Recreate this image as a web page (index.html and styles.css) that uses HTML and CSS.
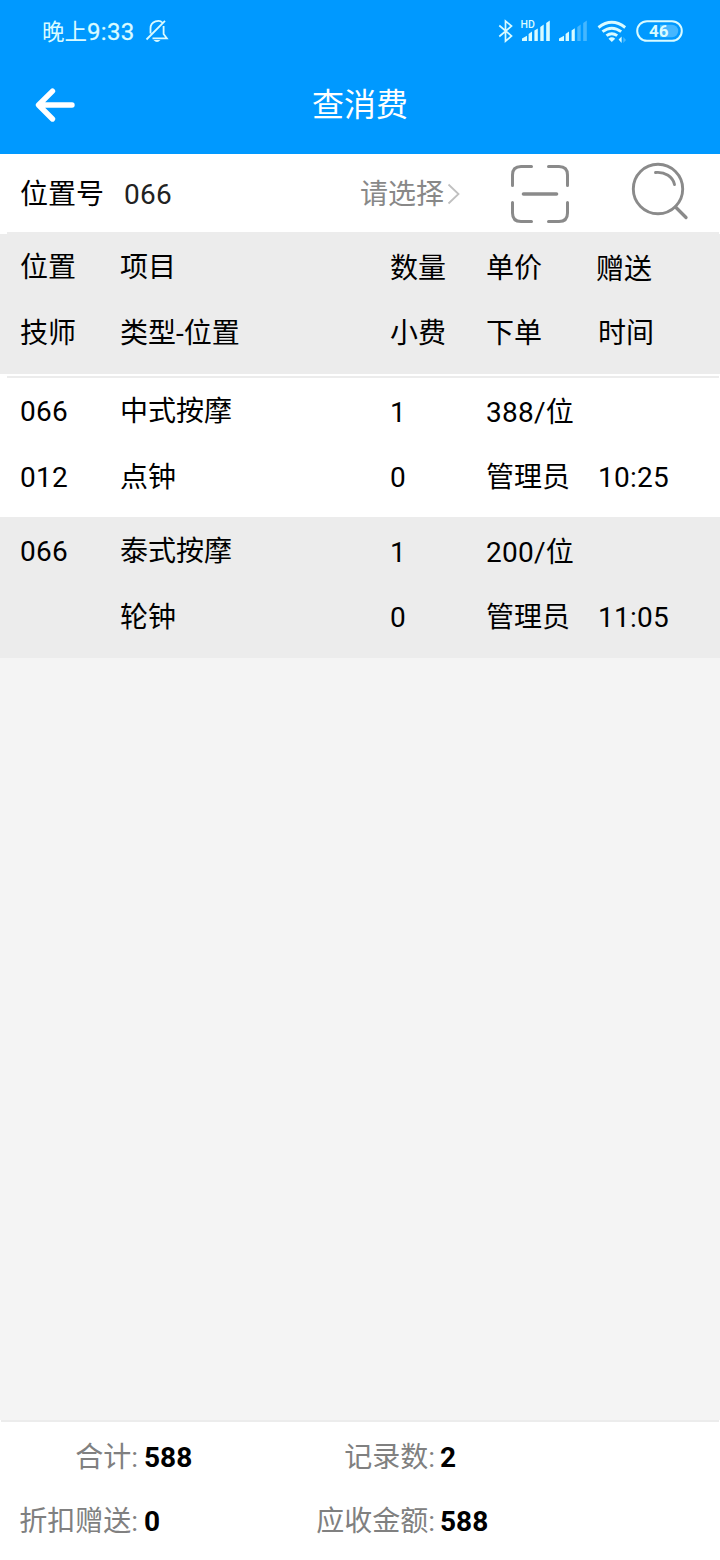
FILE: index.html
```
<!DOCTYPE html>
<html lang="zh-CN">
<head>
<meta charset="utf-8">
<title>查消费</title>
<link rel="stylesheet" href="styles.css">
</head>
<body>
<div class="app">
  <header class="top">
    <div class="status">
      <span class="clock">晚上<span class="clock-digits">9:33</span></span>
      <svg class="bell" width="24" height="24" viewBox="0 0 24 24" fill="none" stroke="#d9fbff" stroke-width="1.8">
        <path d="M5.5 14.500V9.500C5.500 1.500 15 .500 17 3.500M18.600 7V15L21.800 19.300H7.500M1.500 20.500L20 1.800"/>
        <path d="M8.500 21H15.500Q12 25 8.500 21Z" fill="#d9fbff" stroke="none"/>
      </svg>
      <svg class="indicators" width="190" height="28" viewBox="495 17 190 28" fill="none">
        <path d="M499.300 25.500L511.500 36L505.500 41.200V21L511.500 26L499.300 36.500" stroke="#d9fbff" stroke-width="1.700"/>
        <text class="hd" x="520.500" y="28">HD</text>
        <g fill="#d9fbff">
          <path d="M522 38.500L527 35.800V41H522ZM528.600 34L532 31.500V41H528.600ZM534.400 30.500L537.800 28.500V41H534.400ZM540.300 27L543.700 24.500V41H540.300ZM546.200 23L549.800 20.500V41H546.200Z"/>
          <path d="M559 38.500L564 35.800V41H559ZM565.600 34L569 31.500V41H565.600ZM571.600 30.500L574.800 28.200V41H571.600Z"/>
        </g>
        <path d="M577.300 27L580.700 24.500V41H577.300ZM583.200 23L586.800 20.500V41H583.200Z" fill="#45b7ff"/>
        <g stroke="#d9fbff" stroke-width="2.900">
          <path d="M598.500 27.500Q611.800 17.200 625.200 27.500"/>
          <path d="M602.500 31.700Q611.800 24.600 621.200 31.700"/>
          <path d="M606.500 35.700Q611.800 31.600 617.200 35.700"/>
        </g>
        <path d="M608.500 38.700Q611.800 36 615.200 38.700L611.800 42Z" fill="#d9fbff"/>
        <path d="M618.600 39.500L621.600 36.500V43Z" fill="#d9fbff"/>
        <path d="M623.300 37L626 40L623.300 43Z" fill="#45b7ff"/>
        <rect x="637.200" y="21.200" width="44.600" height="19.600" rx="9.800" stroke="#d9fbff" stroke-width="2"/>
        <path d="M660 24.800H672A6.200 6.200 0 0 1 672 37.200H660Z" fill="#45b7ff"/>
        <text class="battery" x="649" y="37">46</text>
      </svg>
    </div>
    <div class="titlebar">
      <svg class="back" width="44" height="38" viewBox="33 86 44 38" fill="none" stroke="#fff" stroke-width="5.400" stroke-linecap="round" stroke-linejoin="round">
        <path d="M52.500 91.200L38.500 105L52.500 119M39 105H72"/>
      </svg>
      <h1 class="title">查消费</h1>
    </div>
  </header>

  <section class="search">
    <span class="search-label">位置号</span>
    <span class="search-value num">066</span>
    <span class="picker">请选择</span>
    <svg class="chevron" width="14" height="24" viewBox="0 0 14 24" fill="none" stroke="#c0c0c0" stroke-width="1.800"><path d="M1.500 2.500L11.500 12L1.500 21.500"/></svg>
    <svg class="scan" width="60" height="60" viewBox="510 164 60 60" fill="none" stroke="#8a8a8a" stroke-width="3" stroke-linecap="round">
      <path d="M531.500 166.500H521Q512.500 166.500 512.500 175V185.500M548.500 166.500H559Q567.500 166.500 567.500 175V185.500M512.500 202.500V213Q512.500 221.500 521 221.500H531.500M567.500 202.500V213Q567.500 221.500 559 221.500H548.500"/>
      <path d="M523.500 194H556.500" stroke-width="3.600"/>
    </svg>
    <svg class="magnifier" width="60" height="60" viewBox="630 162 60 60" fill="none" stroke="#8a8a8a" stroke-width="2.900" stroke-linecap="round">
      <circle cx="658" cy="189" r="24.700"/>
      <path d="M655.500 172.500C665 171.500 673 177 674.500 184.500"/>
      <path d="M675.500 207L686 217.500" stroke-width="3.300"/>
    </svg>
  </section>

  <section class="head">
    <div class="line"><span>位置</span><span>项目</span><span class="down">数量</span><span class="down">单价</span><span class="gift">赠送</span></div>
    <div class="line"><span>技师</span><span>类型-位置</span><span>小费</span><span>下单</span><span>时间</span></div>
  </section>
  <hr class="rule">
  <main class="list">
    <article class="record">
      <div class="line"><span class="num">066</span><span>中式按摩</span><span class="down">1</span><span class="down num">388/位</span></div>
      <div class="line"><span class="num">012</span><span>点钟</span><span>0</span><span>管理员</span><span class="num">10:25</span></div>
    </article>
    <article class="record shaded">
      <div class="line"><span class="num">066</span><span>泰式按摩</span><span class="down">1</span><span class="down num">200/位</span></div>
      <div class="line"><span></span><span>轮钟</span><span>0</span><span>管理员</span><span class="num">11:05</span></div>
    </article>
  </main>

  <footer class="totals">
    <span class="key">合计:</span><b>588</b><span class="key">记录数:</span><b class="near">2</b>
    <span class="key">折扣赠送:</span><b>0</b><span class="key">应收金额:</span><b class="near">588</b>
  </footer>
</div>
</body>
</html>
```
FILE: styles.css
```
* { box-sizing: border-box; }
body {
  margin: 0;
  background: #f4f4f4;
  color: #000;
  font: 28px/40px Roboto, "Noto Sans CJK SC", sans-serif;
}
.app { width: 720px; height: 1560px; display: flex; flex-direction: column; overflow: hidden; }
.top { height: 154px; flex: none; background: #0099ff; color: #fff; }
.status { height: 62px; padding: 0 35px 0 42px; display: flex; align-items: center; color: #d9fbff; }
.clock { font-size: 22.5px; line-height: 30px; white-space: nowrap; padding-top: 1px; }
.clock-digits { font-size: 24px; letter-spacing: .3px; -webkit-text-stroke: .3px #d9fbff; }
.bell { margin-left: 10px; }
.indicators { margin-left: auto; }
.hd { font: 500 10.5px Roboto, sans-serif; fill: #d9fbff; }
.battery { font: bold 17px Roboto, sans-serif; fill: #d9fbff; }
.titlebar { height: 86px; padding: 0 33px; display: grid; grid-template-columns: 44px 1fr 44px; align-items: center; }
.title { margin: 0; font-size: 32px; font-weight: 400; text-align: center; }

.search { height: 78px; flex: none; background: #fff; padding: 2px 0 0 20px; display: flex; align-items: center; }
.search-label { width: 104px; padding-top: 2px; }
.search-value { width: 236px; padding-top: 2px; color: #222; }
.picker { width: 87px; padding-top: 2px; color: #888; }
.scan { margin-left: 49px; }
.magnifier { margin-left: 60px; margin-bottom: 4px; }

.line { height: 40px; padding-left: 20px; display: grid; grid-template-columns: 100px 270px 96px 112px 1fr; white-space: nowrap; }
.num { letter-spacing: .25px; }
.down { padding-top: 1px; }
.gift { margin-left: -2px; padding-top: 2px; }
.head {
  height: 142px;
  flex: none;
  background: linear-gradient(#fff, #fff) 0 0 / 7px 2px no-repeat, linear-gradient(#fff, #fff) 100% 0 / 1px 2px no-repeat, #ececec;
  padding-top: 16px;
  display: grid;
  align-content: start;
  gap: 26px;
}
.rule { width: 100%; height: 4px; flex: none; margin: 0; border: 0; border-top: 2px solid #fff; background: linear-gradient(90deg, #fff 7px, #ececec 7px 719px, #fff 719px); }
.list { flex: 1; }
.record { height: 139px; padding-top: 14px; background: #fff; display: grid; align-content: start; gap: 26px; }
.shaded { height: 141px; padding-top: 15px; background: #ececec; }

.totals {
  height: 140px;
  flex: none;
  background: linear-gradient(#ececec, #ececec) 1px 0 / 718px 2px no-repeat, #fff;
  padding: 18px 0 0 18px;
  display: grid;
  grid-template-columns: 121px 150px 147px 1fr;
  grid-auto-rows: 40px;
  row-gap: 24px;
}
.key { padding-right: 1px; text-align: right; color: #808080; }
.totals .near { padding-left: 4px; }
.totals b { padding-left: 5px; }
```
